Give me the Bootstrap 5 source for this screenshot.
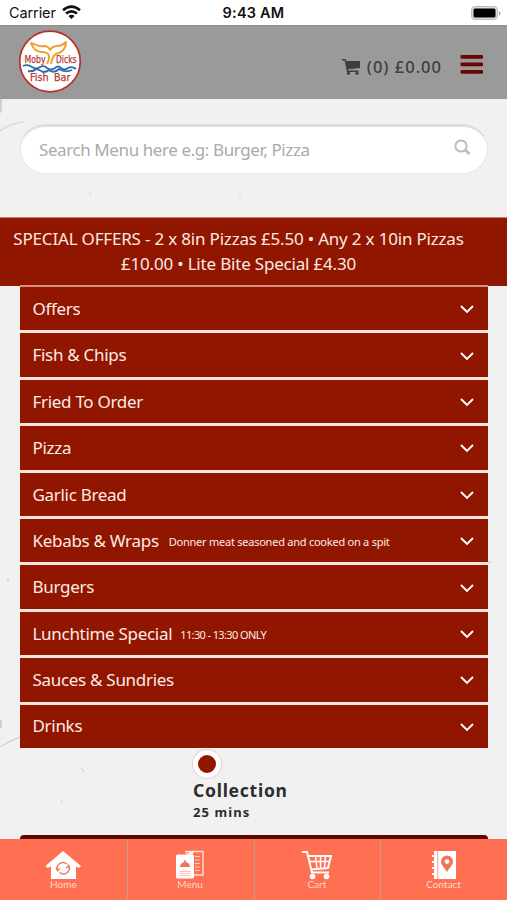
<!DOCTYPE html>
<html lang="en">
<head>
<meta charset="utf-8">
<meta name="viewport" content="width=device-width, initial-scale=1">
<title>Moby Dicks Fish Bar</title>
<link href="https://cdn.jsdelivr.net/npm/bootstrap@5.3.0/dist/css/bootstrap.min.css" rel="stylesheet">
<style>
body{height:900px;overflow:hidden;background:#f1f1f1;font-family:"Noto Sans","Open Sans",sans-serif;}
svg{display:block;flex:none}
.screen{height:900px}
.status{height:25px;background:#fff;color:#111;font:14.5px Inter,sans-serif;padding:4px 4px 0 9px}
.carrier{letter-spacing:-.1px}
.wifi{margin:1px 0 0 -2px}
.status .time{font-weight:600;letter-spacing:.2px}
.topbar{height:74px;background:#9a9a9a;padding:0 23px 0 17px;border-top:1px solid #8f8f8f}
.brand-logo{margin-bottom:7px}
.basket{color:#3e3e3e;font-size:16.5px;font-weight:500;letter-spacing:1px;padding-top:9px;margin-right:1px}
.texture{position:absolute;left:0;top:99px;z-index:0}
.main{position:relative;z-index:1}
.search{height:50px;margin:25px 19px 43px 20px;background:#fff;border-radius:25px;border:1px solid #e6e6e6;border-top:3px solid #dedede;padding:0 16px 0 18px}
.search span{color:#aaa;font-size:17px;letter-spacing:-.41px}
.promo{height:69px;background:#911600;color:#fde9e3;font-size:17px;line-height:24.5px;padding:9px 38px 0 8px;text-align:center;letter-spacing:-.19px;border-top:1px solid #c98379;white-space:nowrap}
.menu{margin:0 19px 0 20px;background:#fbe4df;border:solid #d98f84;border-width:2px 0 0;margin-top:-1px;gap:3px}
.menu .entry{height:43.4px;background:#911600;color:#fdebe6;padding:0 14px 0 12.5px;font-size:17px;letter-spacing:-.3px}
.entry svg{margin-top:2px}
.entry small{font-size:11px;letter-spacing:-.24px;margin-left:10px;padding-top:4px}
.entry .hours{letter-spacing:-.62px;margin-left:8px}
.collect{margin-left:193px;color:#2d2d2d;font-weight:700}
.dot{width:28px;height:28px;border-radius:50%;background:#911600;border:5px solid #fff;box-shadow:0 0 0 1px #e5cfcb;margin-top:2px}
.collect .big{font-size:17.5px;line-height:24px;letter-spacing:.75px}
.collect .mins{font-size:13px;line-height:21px;letter-spacing:1.1px}
.panel{height:4px;margin:12px 19px 0 20px;background:#5e0600;border-radius:6px 6px 0 0}
.tabs{height:61px;background:#ff6f51;color:#ffd9ce;font:10px Lato,sans-serif}
.tabs .tab{flex:1;padding-top:11px}
.tabs .tab+.tab{box-shadow:inset 1px 0 #c89a8c}
.tabs .tab span{line-height:11px;margin-top:-1px}
</style>
<script src="https://cdn.jsdelivr.net/npm/bootstrap@5.3.0/dist/js/bootstrap.bundle.min.js"></script>
</head>
<body>
<svg width="0" height="0" class="position-absolute"><symbol id="chev" viewBox="0 0 14 9"><path d="M1 1l6 6 6-6" fill="none" stroke="#fff" stroke-width="1.900"/></symbol></svg>
<svg class="texture" width="507" height="740" fill="none" stroke="#c4c4c4"><path d="M0 0h2v11l-2 4z" fill="#d0d0d0" stroke="none"/><path d="M0 32q10-8 24-9" stroke="#d2d2d2" stroke-width="1.200"/><path d="M0 648q9-6 20-10" /><path d="M0 621h2v8H0z" fill="#d0d0d0" stroke="none"/><path d="M81 669l3 4M89 94l2 1M239 98l2 1M8 480v3M488 464l3-2M61 702l2 1" stroke="#dcdcdc" stroke-width="2"/></svg>
<div class="screen d-flex flex-column">
<div class="status d-flex justify-content-between position-relative">
 <div class="d-flex gap-2"><span class="carrier">Carrier</span>
 <svg class="wifi" width="19" height="15" viewBox="0 0 19 15" fill="none" stroke="#111" stroke-width="2.600"><path d="M1 5.200q8.500-7 17 0M4 8.600q5.500-4.500 11 0"/><path d="M6.400 10.900q3.100-2.400 6.200 0L9.500 14z" fill="#111" stroke="none"/></svg></div>
 <span class="time position-absolute start-50 translate-middle-x">9:43 AM</span>
 <svg width="33" height="16" viewBox="0 0 33 16"><rect x="1.500" y="2.500" width="26" height="13" rx="3.500" fill="#ddd" stroke="#bbb"/><rect x="3.500" y="4.500" width="22" height="9" rx="1.500" fill="#000"/><path d="M29 7v4.500q3-2.200 0-4.500z" fill="#999"/></svg>
</div>
<div class="topbar d-flex align-items-center justify-content-between">
 <svg class="brand-logo" width="66" height="68" viewBox="0 0 66 68"><circle cx="33" cy="36.500" r="30.300" fill="#fff" stroke="#b4322c" stroke-width="1.700"/>
 <g fill="none" stroke="#efa02d" stroke-width="2" stroke-linejoin="round"><path d="M30 39c4-8 2-12-5-12-5 0-9-3-11-9 5 2 8 4 12 3 4 0 6 1 7 4 2-3 4-4 7-4 4 0 7-2 9-4 0 6-2 9-7 11-5 0-7 5-8 11"/></g>
 <g fill="none" stroke="#2b6cb0" stroke-width="1.800"><path d="M6 41q5-2 9 1 4 3 8 0 4-2 7 1 4 3 8 0 3-3 6 0 4 3 7 0 4-2 8 1"/><path d="M11 46q5 1 8-2 4 1 7 3 4 0 6-2 5 4 10-1 6 4 13 1"/></g>
 <g fill="#b9332e" font-family="DejaVu Sans,sans-serif" font-size="10.500" stroke="#b9332e" stroke-width=".25"><text x="7.500" y="37.500" textLength="21" lengthAdjust="spacingAndGlyphs">Moby</text><text x="39" y="37.500" textLength="20.500" lengthAdjust="spacingAndGlyphs">Dicks</text><text x="13" y="56" textLength="18.500" lengthAdjust="spacingAndGlyphs">Fish</text><text x="37" y="56" textLength="16.500" lengthAdjust="spacingAndGlyphs">Bar</text></g></svg>
 <div class="d-flex align-items-center">
 <div class="basket d-flex align-items-center"><svg class="me-1" width="21" height="16" viewBox="0 0 21 16" fill="#3e3e3e"><path d="M0 0h3.600l.8 2H18v7L6 10.300l.3 1.200H16.500V13H5L2.600 1.500H0z"/><circle cx="6.500" cy="14.300" r="1.600"/><circle cx="15" cy="14.300" r="1.600"/></svg><span>(0) £0.00</span></div>
 <svg class="ms-3 mt-1" width="25" height="20" viewBox="0 0 25 20" fill="#6b0500"><rect x="1.500" y="0" width="22.500" height="3.700" rx="1"/><rect x="1.500" y="7.500" width="22.500" height="3.700" rx="1"/><rect x="1.500" y="15" width="22.500" height="3.700" rx="1"/></svg>
 </div>
</div>
<div class="main">
<div class="search d-flex align-items-center justify-content-between"><span>Search Menu here e.g: Burger, Pizza</span><svg class="mb-2" width="17" height="17" viewBox="0 0 17 17" fill="none" stroke="#bcbcbc" stroke-width="2"><circle cx="7" cy="8" r="5.600"/><path d="M11 12l4.500 4" stroke-width="2.600"/></svg></div>
<div class="promo">SPECIAL OFFERS - 2 x 8in Pizzas £5.50 • Any 2 x 10in Pizzas<br>£10.00 • Lite Bite Special £4.30</div>
<div class="menu d-flex flex-column">
<div class="entry d-flex align-items-center"><span>Offers</span><svg class="ms-auto" width="14" height="9"><use href="#chev"/></svg></div>
<div class="entry d-flex align-items-center"><span>Fish &amp; Chips</span><svg class="ms-auto" width="14" height="9"><use href="#chev"/></svg></div>
<div class="entry d-flex align-items-center"><span>Fried To Order</span><svg class="ms-auto" width="14" height="9"><use href="#chev"/></svg></div>
<div class="entry d-flex align-items-center"><span>Pizza</span><svg class="ms-auto" width="14" height="9"><use href="#chev"/></svg></div>
<div class="entry d-flex align-items-center"><span>Garlic Bread</span><svg class="ms-auto" width="14" height="9"><use href="#chev"/></svg></div>
<div class="entry d-flex align-items-center"><span>Kebabs &amp; Wraps</span><small>Donner meat seasoned and cooked on a spit</small><svg class="ms-auto" width="14" height="9"><use href="#chev"/></svg></div>
<div class="entry d-flex align-items-center"><span>Burgers</span><svg class="ms-auto" width="14" height="9"><use href="#chev"/></svg></div>
<div class="entry d-flex align-items-center"><span>Lunchtime Special</span><small class="hours">11:30 - 13:30 ONLY</small><svg class="ms-auto" width="14" height="9"><use href="#chev"/></svg></div>
<div class="entry d-flex align-items-center"><span>Sauces &amp; Sundries</span><svg class="ms-auto" width="14" height="9"><use href="#chev"/></svg></div>
<div class="entry d-flex align-items-center"><span>Drinks</span><svg class="ms-auto" width="14" height="9"><use href="#chev"/></svg></div>
</div>
<div class="collect"><div class="dot"></div><div class="big">Collection</div><div class="mins">25 mins</div></div>
<div class="panel"></div>
</div>
<div class="tabs d-flex mt-auto position-relative z-1">
<div class="tab d-flex flex-column align-items-center"><svg width="36" height="30" viewBox="0 0 36 30"><path d="M18 1L.5 16l2 2L6 16.500V29h25V16.500l3 1.500 2-2z" fill="#fff"/><g fill="none" stroke="#ee765d" stroke-width="1.400"><path d="M13 21.500q-2.500-4 1-7.500 4-3 8 0M23 14.500q3 4-.5 8-4 3-8 0"/><path d="M11 17.500l1.500 3 2.500-2M21 18l2.500-2 1.500 3"/></g></svg><span>Home</span></div>
<div class="tab d-flex flex-column align-items-center"><svg width="28" height="30" viewBox="0 0 28 30"><path d="M10 3V1.500h17V25H18" fill="none" stroke="#ffe3db" stroke-width="1.300"/><path d="M9 4.500l8-3.500v3.500z" fill="#fff"/><path d="M19 6.500h5M19 10h5M19 13.500h5M19 17h5M19 20.500h5" stroke="#ffd0c2"/><rect x="0" y="4.500" width="18" height="24" rx="1.500" fill="#fff"/><path d="M4 17a5 5 0 0 1 10 0z" fill="#ee765d"/><path d="M9 10v2" stroke="#ee765d" stroke-width="1.500"/><path d="M3.500 21.500h11M3.500 23.500h11M3.500 25.500h11" stroke="#ffc0ae"/></svg><span>Menu</span></div>
<div class="tab d-flex flex-column align-items-center"><svg width="32" height="30" viewBox="0 0 32 30" fill="none" stroke="#fff" stroke-width="2"><path d="M1 2h5l5 20.500h17M8 6h22l-3 12-17 1.500"/><path d="M14.500 6l1.500 12.500M19.500 6v12.500M24.500 6l-1 12.500M9 11.500h20" stroke-width="1.500"/><circle cx="11.500" cy="26.500" r="2.800" fill="#fff" stroke="none"/><circle cx="25.500" cy="26.500" r="2.800" fill="#fff" stroke="none"/></svg><span>Cart</span></div>
<div class="tab d-flex flex-column align-items-center"><svg width="24" height="30" viewBox="0 0 24 30"><path d="M2 1h3.500v28H2zM6.200 1H24v28H6.200z" fill="#fff"/><path d="M0 6h3M0 12h3M0 18h3M0 24h3" stroke="#fff" stroke-width="2"/><path d="M15 22c-3-5-6-7-6-10.500a6 6 0 0 1 12 0C21 15 18 17 15 22z" fill="#ee765d"/><circle cx="15" cy="11.500" r="2.300" fill="#fff"/></svg><span>Contact</span></div>
</div>
</div>
</body>
</html>
